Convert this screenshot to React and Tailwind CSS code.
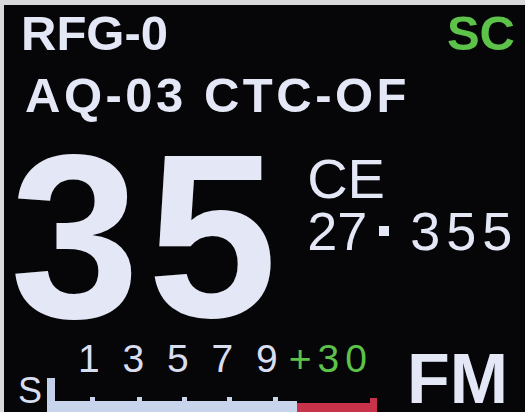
import React from 'react';

const SMeter = () => (
    <svg width="335" height="34" viewBox="0 0 335 34" className="block shrink-0">
        <rect x="0" y="0" width="8" height="34" fill="#c4d0ea" />
        <rect x="0" y="23" width="250" height="11" fill="#c8d3ec" />
        {[43, 90, 135, 180, 226].map((x) => (
            <rect key={x} x={x} y="19" width="5" height="5" fill="#c8d3ec" />
        ))}
        <rect x="250" y="25" width="80" height="9" fill="#c8324a" />
        <rect x="323" y="20" width="7" height="6" fill="#c8324a" />
    </svg>
);

const App = () => {
    return (
        <div
            className="w-[525px] h-[412px] overflow-hidden bg-[#060608] border-t-[5px] border-l-[4px] border-[#d9d9db] flex flex-col text-[#e4e8f6]"
            style={{ fontFamily: '"Liberation Sans", Arial, sans-serif' }}
        >
            {/* top line */}
            <div className="mt-[4px] h-[49px] flex justify-between pl-[17px] pr-[10px] text-[49px] leading-none font-bold">
                <span>RFG-0</span>
                <span className="text-[#5cc24a]">SC</span>
            </div>

            <div className="mt-[13px] h-[49px] pl-[21px] text-[49px] leading-none font-bold tracking-[3.5px] whitespace-pre">
                AQ-03 CTC-OF
            </div>

            {/* channel + freq */}
            <div className="mt-[26px] h-[180px] flex">
                <div className="pl-[6px] text-[233px] leading-[180px] font-bold tracking-[8px]">35</div>
                <div className="ml-[22px] flex flex-col leading-[48px]">
                    <span className="mt-[9px] text-[56px]">CE</span>
                    <span className="mt-[4px] text-[54px] whitespace-nowrap">
                        27<span className="inline-block align-baseline w-[10px] h-[10px] bg-[#e4e8f6] ml-[12px] mr-[21px] mb-[14px]" />
                        <span className="tracking-[6px]">355</span>
                    </span>
                </div>
            </div>

            {/* s-meter + mode */}
            <div className="flex">
                <div className="w-[403px] flex flex-col">
                    <div className="mt-[17px] pl-[74px] text-[39px] leading-[32px] tracking-[6px] whitespace-pre text-[#d8ddf0]">
                        1 3 5 7 9<span className="ml-[5px] text-[#5cc24a]">+30</span>
                    </div>
                    <div className="flex items-end h-[37px]">
                        <span className="pl-[14px] text-[36px] leading-[30px] text-[#d8ddf0] mb-[6px]">S</span>
                        <div className="ml-[5px] self-end">
                            <SMeter />
                        </div>
                    </div>
                </div>
                <div className="mt-[23px] text-[70px] leading-[60px] font-bold">FM</div>
            </div>
        </div>
    );
};

export default App;
